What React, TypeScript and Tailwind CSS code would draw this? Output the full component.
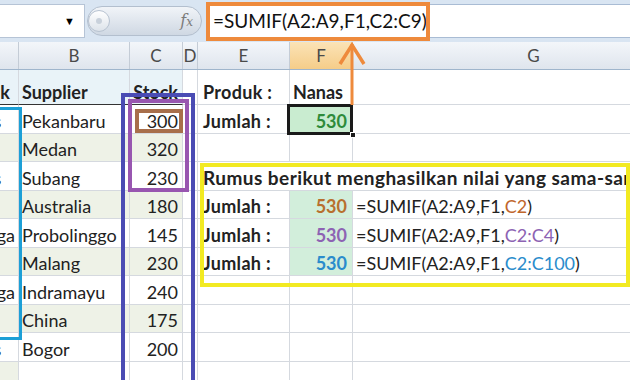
import React from 'react';

type Row = {
  a?: string;
  b?: string;
  c?: string;
  e?: string;
  f?: React.ReactNode;
  g?: React.ReactNode;
  striped?: boolean;
  stripeA?: boolean;
  head?: boolean;
  fGreen?: boolean;
  wide?: string;
};

const S = (p: { children: React.ReactNode; c: string }) => <span style={{ color: p.c }}>{p.children}</span>;

const rows: Row[] = [
  { a: 'Produk', b: 'Supplier', c: 'Stock', e: 'Produk :', f: 'Nanas', head: true },
  { a: 'Nanas', b: 'Pekanbaru', c: '300', e: 'Jumlah :', f: <span className="text-[#2e8b3a]">530</span> },
  { b: 'Medan', c: '320', striped: true },
  { a: 'Nanas', b: 'Subang', c: '230', wide: 'Rumus berikut menghasilkan nilai yang sama-sama' },
  {
    b: 'Australia', c: '180', striped: true, e: 'Jumlah :', fGreen: true,
    f: <S c="#b8702e">530</S>,
    g: <>=SUMIF(A2:A9,F1,<S c="#c0662c">C2</S>)</>,
  },
  {
    a: 'Mangga', b: 'Probolinggo', c: '145', e: 'Jumlah :', fGreen: true,
    f: <S c="#8d63b3">530</S>,
    g: <>=SUMIF(A2:A9,F1,<S c="#8d63b3">C2:C4</S>)</>,
  },
  {
    b: 'Malang', c: '230', striped: true, e: 'Jumlah :', fGreen: true,
    f: <S c="#2a8ccc">530</S>,
    g: <>=SUMIF(A2:A9,F1,<S c="#2a8ccc">C2:C100</S>)</>,
  },
  { a: 'Mangga', b: 'Indramayu', c: '240' },
  { b: 'China', c: '175', striped: true },
  { a: 'Nanas', b: 'Bogor', c: '200' },
  { stripeA: true },
];

const cols = 'grid grid-cols-[19px_111px_53px_15px_92px_63px_362px]';
const cell = 'border-r border-b border-[#d5d9df] flex items-end pb-[2px] leading-[20px] overflow-hidden whitespace-nowrap';

function HeaderRow() {
  const labels = ['', 'B', 'C', 'D', 'E', 'F', 'G'];
  return (
    <div className={`${cols} h-[28px] border-b border-[#9fb5cc]`}>
      {labels.map((l, i) => (
        <div
          key={i}
          className={`flex items-center justify-center border-r border-[#c4ccd6] text-[17px] text-[#4a4a4a] ${
            l === 'F'
              ? 'bg-linear-to-b from-[#fbe3b6] to-[#f5cd89]'
              : 'bg-linear-to-b from-[#f3f6fa] to-[#dfe5ed]'
          }`}
        >
          {l}
        </div>
      ))}
    </div>
  );
}

function BodyRow({ r }: { r: Row }) {
  const h = r.head ? 'h-[35px]' : 'h-[28.5px]';
  const tableBg = r.head ? 'bg-[#e9f3f8]' : r.striped ? 'bg-[#eef2e7]' : 'bg-white';
  const tableBorder = r.head ? 'border-b-[#333]' : '';
  const bold = r.head ? 'font-bold' : '';
  return (
    <div className={`${cols} ${h} text-[18px] text-[#222]`}>
      <div className={`${cell} ${r.stripeA ? 'bg-[#eef2e7]' : tableBg} ${tableBorder} ${bold}`}>
        <span className="ml-[-48px]">{r.a}</span>
      </div>
      <div className={`${cell} ${tableBg} ${tableBorder} ${bold} pl-[3px]`}>{r.b}</div>
      <div className={`${cell} ${tableBg} ${tableBorder} ${bold} justify-end pr-[4px]`}>{r.c}</div>
      <div className={cell} />
      {r.wide ? (
        <div className={`col-span-3 ${cell} font-bold pl-[5px] text-[19px] tracking-[0.45px]`}>{r.wide}</div>
      ) : (
        <>
          <div className={`${cell} font-bold pl-[5px] tracking-[0.3px]`}>{r.e}</div>
          <div
            className={`${cell} font-bold ${
              r.head ? 'pl-[3px]' : 'justify-end pr-[5px]'
            } ${r.fGreen ? 'bg-[#d2eedb]' : ''} ${r.f && !r.head && !r.fGreen ? 'bg-[#c9ecd0]' : ''}`}
          >
            {r.f}
          </div>
          <div className={`${cell} pl-[3px]`}>{r.g}</div>
        </>
      )}
    </div>
  );
}

function FormulaBar() {
  return (
    <div className="flex h-[42px] bg-[#d9e5f2] pt-[4px] pb-[4px]">
      <div className="w-[85px] bg-white border border-[#b6c4d6] border-l-0 flex items-center justify-end pr-[9px]">
        <span className="text-[11px] text-black">▼</span>
      </div>
      <div className="ml-[2px] w-[115px] my-[2px] rounded-full border border-[#b3bfce] bg-linear-to-b from-[#f1f4f8] to-[#cfd8e3] flex items-center">
        <div className="w-[22px] h-[22px] rounded-full border border-[#b8c3d1] bg-linear-to-b from-white to-[#dde3ea] flex items-center justify-center">
          <div className="w-[6px] h-[6px] rounded-full bg-[#c9d1db]" />
        </div>
        <span className="ml-auto mr-[8px] font-['DejaVu_Serif',serif] italic text-[16px] text-[#7b7b7b]">
          f<span className="text-[12px]">x</span>
        </span>
      </div>
      <div className="ml-[4px] flex-1 bg-white border-y border-[#a9bcd4] flex items-center pl-[7px] text-[19px] text-[#111]">
        =SUMIF(A2:A9,F1,C2:C9)
      </div>
    </div>
  );
}

export default function App() {
  return (
    <div className="relative w-[630px] h-[380px] overflow-hidden bg-white font-['Lato','Open_Sans',sans-serif]">
      <FormulaBar />
      <HeaderRow />
      {rows.map((r, i) => (
        <BodyRow key={i} r={r} />
      ))}

      {/* highlight boxes */}
      <div className="absolute left-[-6px] top-[107px] w-[28px] h-[233px] border-[3px] border-[#1c9fd6]" />
      <div className="absolute left-[121px] top-[93px] w-[74px] h-[300px] border-[4px] border-[#4a4cb4]" />
      <div className="absolute left-[128px] top-[99px] w-[61px] h-[93px] border-[4px] border-[#9856b0]" />
      <div className="absolute left-[135px] top-[109px] w-[48px] h-[24px] border-[4px] border-[#a86f4b]" />
      <div className="absolute left-[287px] top-[104px] w-[66px] h-[31px] border-[3px] border-[#1a1a1a]" />
      <div className="absolute left-[350px] top-[132px] w-[6px] h-[6px] bg-[#1a1a1a] border border-white" />
      <div className="absolute left-[200px] top-[163px] w-[430px] h-[124px] border-[4px] border-[#f2ea22]" />
      <div className="absolute left-[206px] top-[2px] w-[224px] h-[39px] border-[4px] border-[#ee8a3c]" />

      {/* arrow */}
      <svg className="absolute left-[336px] top-[36px]" width="32" height="72" viewBox="0 0 32 72">
        <path d="M16 8 V69" stroke="#ee8a3c" strokeWidth="3" fill="none" />
        <path d="M4 28 L16 9 L28 28" stroke="#ee8a3c" strokeWidth="3.5" fill="none" strokeLinejoin="miter" />
      </svg>
    </div>
  );
}
